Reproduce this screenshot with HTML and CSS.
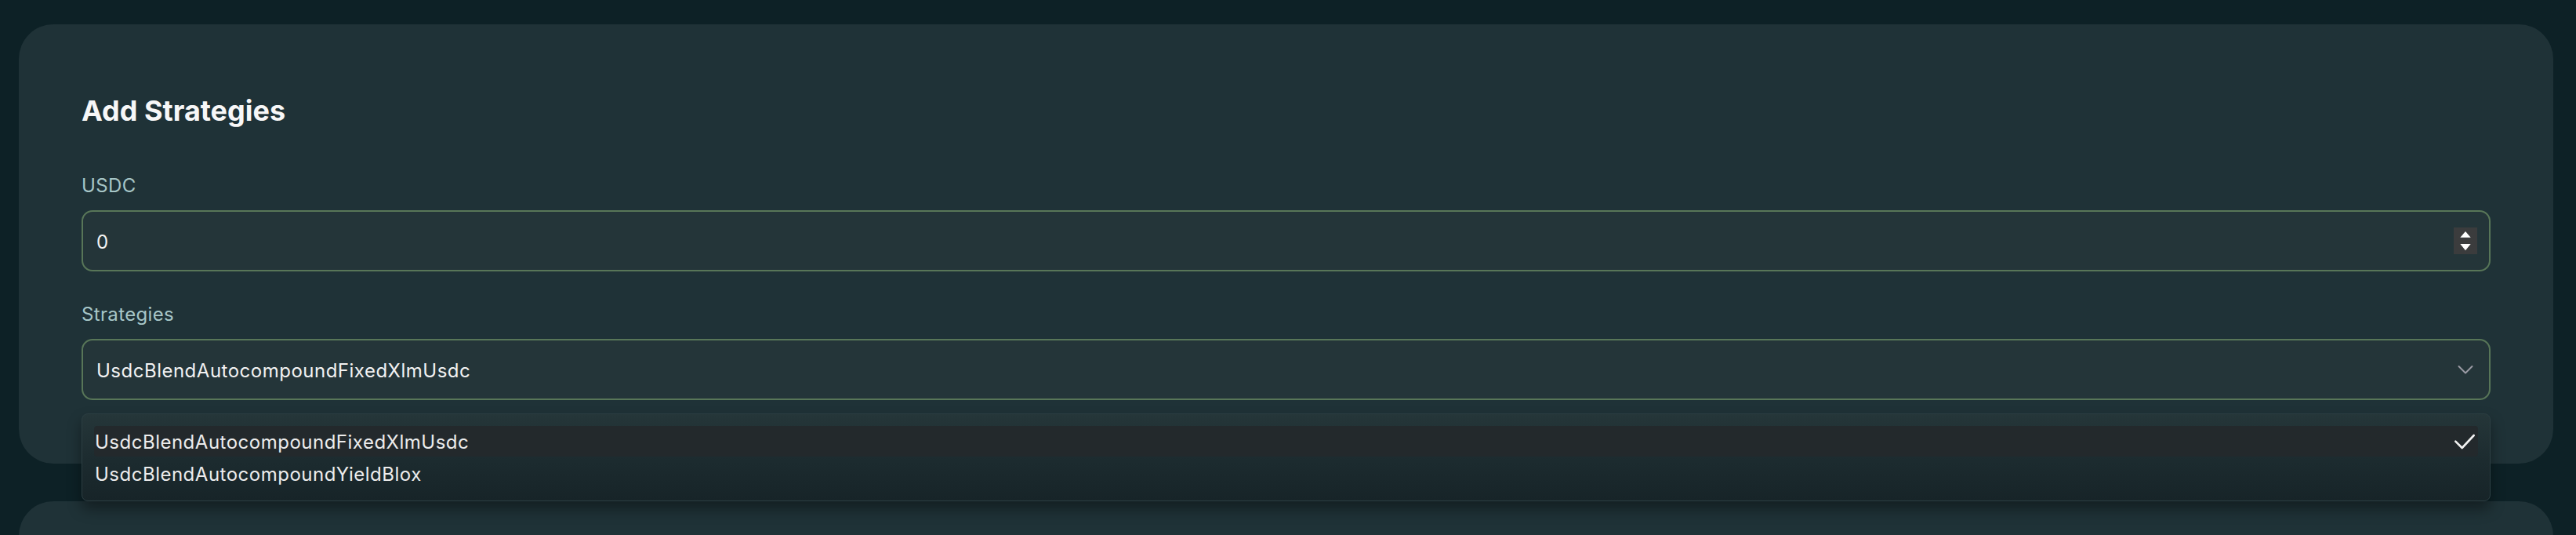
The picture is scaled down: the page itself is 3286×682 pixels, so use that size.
FILE: index.html
```html
<!DOCTYPE html>
<html lang="en">
<head>
<meta charset="utf-8">
<title>Add Strategies</title>
<link rel="stylesheet" href="styles.css">
</head>
<body>
<main class="page">
  <section class="card">
    <h2 class="card-title">Add Strategies</h2>

    <div class="field field-amount">
      <label class="field-label" for="usdc">USDC</label>
      <div class="control">
        <span class="control-value" id="usdc">0</span>
        <span class="spinner" aria-hidden="true">
          <svg width="30" height="34" viewBox="0 0 30 34">
            <polygon points="15,5 21.7,12.7 8.3,12.7" fill="#ffffff"/>
            <polygon points="8.3,21 21.7,21 15,29.3" fill="#ffffff"/>
          </svg>
        </span>
      </div>
    </div>

    <div class="field field-select">
      <label class="field-label">Strategies</label>
      <div class="control">
        <span class="control-value">UsdcBlendAutocompoundFixedXlmUsdc</span>
        <svg class="chevron" width="20" height="12" viewBox="0 0 20 12" aria-hidden="true">
          <polyline points="1.5,2 10,10.5 18.5,2" fill="none" stroke="#9a9aa4" stroke-width="2" stroke-linecap="round" stroke-linejoin="round"/>
        </svg>
      </div>

      <ul class="dropdown" role="listbox">
        <li class="option option-selected" role="option">
          <span>UsdcBlendAutocompoundFixedXlmUsdc</span>
          <svg class="check" width="28" height="22" viewBox="0 0 28 22" aria-hidden="true">
            <polyline points="2.3,10.7 10.7,19 25.7,3" fill="none" stroke="#f2f2f2" stroke-width="2.6" stroke-linecap="round" stroke-linejoin="round"/>
          </svg>
        </li>
        <li class="option" role="option">
          <span>UsdcBlendAutocompoundYieldBlox</span>
        </li>
      </ul>
    </div>
  </section>

  <section class="card card-next"></section>
</main>
</body>
</html>
```

FILE: styles.css
```css
* {
  box-sizing: border-box;
}

html,
body {
  margin: 0;
  background: #0d2126;
}

body {
  font-family: Inter, "Noto Sans", "Liberation Sans", sans-serif;
  color: #f0f0f0;
  padding: 31px 29px 0 24px;
  overflow: hidden;
}

.page {
  display: flex;
  flex-direction: column;
  gap: 48px;
}

.card {
  background: #1f3237;
  border-radius: 44px;
  padding: 90px 80px 81px;
}

.card-next {
  min-height: 300px;
}

.card-title {
  margin: 0 0 60px;
  font-size: 36px;
  line-height: 40px;
  font-weight: 700;
  color: #f7f7f7;
}

.field {
  display: flex;
  flex-direction: column;
}

.field-amount {
  margin-bottom: 39px;
}

.field-select {
  position: relative;
}

.field-label {
  font-size: 24px;
  line-height: 32px;
  letter-spacing: 0.35px;
  color: #a7c6c7;
  margin-bottom: 15px;
}

.control {
  height: 78px;
  border: 2px solid #587658;
  border-radius: 14px;
  background: #243539;
  display: flex;
  align-items: center;
  justify-content: space-between;
  padding: 3px 15px 0 17px;
  font-size: 24px;
  line-height: 29px;
  letter-spacing: 0.5px;
  color: #f2f2f2;
}

.field-select .control {
  padding: 2px 20px 0 17px;
}

.spinner {
  display: flex;
  width: 30px;
  height: 34px;
  background: #3b3c3d;
  margin-top: -3px;
}

.chevron {
  display: block;
  margin-top: -2px;
}

.dropdown {
  position: absolute;
  left: 0;
  right: 0;
  top: calc(100% + 17px);
  margin: 0;
  padding: 15px;
  list-style: none;
  border: 1px solid #2c3e42;
  border-radius: 8px;
  background: linear-gradient(180deg, #253639 0%, #1c2b2f 55%, #172428 100%);
  box-shadow: 0 10px 18px rgba(0, 0, 0, 0.38);
  z-index: 2;
}

.option {
  display: flex;
  align-items: center;
  justify-content: space-between;
  height: 40px;
  padding: 2px 3px 0 1px;
  font-size: 24px;
  line-height: 29px;
  letter-spacing: 0.5px;
  color: #ececec;
  border-radius: 4px;
}

.option-selected {
  background: #23292c;
  height: 39px;
  margin-bottom: 1px;
}

.check {
  display: block;
  margin-top: -2px;
}
```
